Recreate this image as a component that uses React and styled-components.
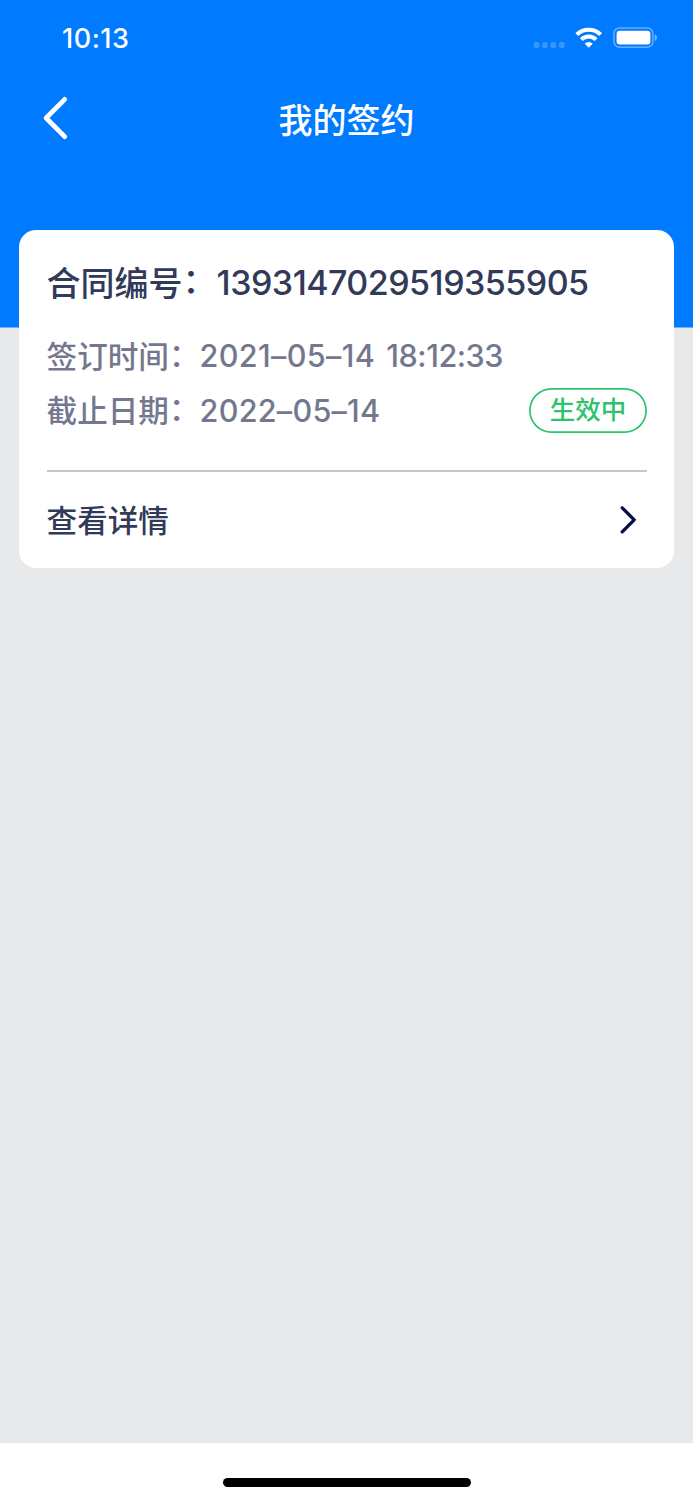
import React from 'react'
import styled, { createGlobalStyle } from 'styled-components'

const contract = {
  number: '1393147029519355905',
  signedDate: '2021–05–14',
  signedTime: '18:12:33',
  endDate: '2022–05–14',
  status: '生效中',
}

const App = () => {
  return (
    <Screen>
      <GlobalStyle />
      <Header>
        <StatusBar>
          <Clock>10:13</Clock>
          <StatusIcons />
        </StatusBar>
        <NavBar>
          <BackButton aria-label="返回">
            <svg width="28" height="46" viewBox="0 0 28 46" fill="none">
              <path d="M22.7 4.4L4.1 23L22.7 41.6" stroke="#fff" strokeWidth="4.8" strokeLinecap="round" strokeLinejoin="round" />
            </svg>
          </BackButton>
          <Title>我的签约</Title>
        </NavBar>
      </Header>

      <Content>
        <Card>
          <ContractNumber>
            <Label>合同编号<Colon>：</Colon></Label>
            <Digits $spacing="-0.53px">{contract.number}</Digits>
          </ContractNumber>
          <InfoRow>
            <Label>签订时间<Colon>：</Colon></Label>
            <Digits $spacing="0.35px">{contract.signedDate}</Digits>
            <Time $spacing="-0.45px">{contract.signedTime}</Time>
          </InfoRow>
          <InfoRow>
            <Label>截止日期<Colon>：</Colon></Label>
            <Digits $spacing="0.25px">{contract.endDate}</Digits>
            <Badge>{contract.status}</Badge>
          </InfoRow>
          <DetailRow>
            <Label>查看详情</Label>
            <svg width="18" height="30" viewBox="0 0 18 30" fill="none">
              <path d="M2.2 2.8L14.2 14.8L2.2 26.8" stroke="#040d42" strokeWidth="3.3" strokeLinecap="round" strokeLinejoin="round" />
            </svg>
          </DetailRow>
        </Card>
      </Content>

      <Footer>
        <HomeIndicator />
      </Footer>
    </Screen>
  )
}

const StatusIcons = () => (
  <svg width="126" height="26" viewBox="0 0 126 26" fill="none">
    <g fill="#fff" fillOpacity="0.22">
      <rect x="2.8" y="17" width="5.6" height="6" rx="1.8" />
      <rect x="11.1" y="17" width="5.6" height="6" rx="1.8" />
      <rect x="19.5" y="17" width="5.6" height="6" rx="1.8" />
      <rect x="28" y="17" width="5.6" height="6" rx="1.8" />
    </g>
    <g stroke="#fff" strokeWidth="4">
      <path d="M45.8 9.5A17 17 0 0 1 69.6 9.5" />
      <path d="M50.3 14.6A10.4 10.4 0 0 1 65.1 14.6" />
    </g>
    <path d="M57.7 22.7L53.6 18.6A5.8 5.8 0 0 1 61.8 18.6Z" fill="#fff" />
    <rect x="82.9" y="3" width="39" height="19.2" rx="5.6" stroke="#fff" strokeOpacity="0.4" strokeWidth="1.5" />
    <rect x="85.6" y="5.7" width="33.8" height="13.8" rx="3" fill="#fff" />
    <path d="M123.7 9.2Q126 10.2 126 12.6Q126 15 123.7 16Z" fill="#fff" fillOpacity="0.45" />
  </svg>
)

export default App

const GlobalStyle = createGlobalStyle`
  body {
    margin: 0;
    background-color: #e8e9eb;
  }
  * {
    box-sizing: border-box;
  }
`

const Screen = styled.div`
  width: 100%;
  height: 1500px;
  display: flex;
  flex-direction: column;
  background: linear-gradient(#007aff 327px, #e8e9eb 328px);
  font-family: Inter, "Noto Sans CJK SC", sans-serif;
  font-weight: 500;
`

const Header = styled.header`
  height: 229.5px;
  color: #fff;
`

const StatusBar = styled.div`
  height: 76px;
  display: flex;
  align-items: center;
  justify-content: space-between;
  padding: 0 36px 0 62px;
`

const Clock = styled.div`
  font-size: 27px;
  line-height: 32px;
  letter-spacing: 0.5px;
  padding-top: 1px;
`

const NavBar = styled.div`
  height: 84px;
  display: grid;
  grid-template-columns: 100px 1fr 100px;
  align-items: center;
`

const BackButton = styled.button`
  display: flex;
  padding: 0 0 0 42px;
  border: none;
  background: none;
`

const Title = styled.h1`
  margin: 0;
  padding-top: 6px;
  font-size: 34px;
  line-height: 48px;
  font-weight: 500;
  text-align: center;
`

const Content = styled.main`
  flex: 1;
  padding: 0 18.6px;
`

const Card = styled.section`
  height: 338px;
  padding: 29.5px 27.4px 0 28px;
  border-radius: 17px;
  background-color: #fff;
`

const Label = styled.span`
  display: flex;
  white-space: nowrap;
`

const Colon = styled.span`
  margin-top: -0.06em;
`

const Digits = styled.span`
  letter-spacing: ${({ $spacing }) => $spacing};
  white-space: nowrap;
`

const Time = styled(Digits)`
  margin-left: 11px;
`

const ContractNumber = styled.h2`
  display: flex;
  align-items: center;
  height: 48px;
  margin: 0 0 22px;
  font-size: 34px;
  line-height: 48px;
  font-weight: 500;
  color: #313a58;

  ${Label} {
    padding-top: 1px;
  }
`

const InfoRow = styled.div`
  display: flex;
  align-items: center;
  height: 54.5px;
  font-size: 30.6px;
  line-height: 44px;
  color: #74788f;

  ${Label} {
    padding-top: 1px;
  }
`

const Badge = styled.span`
  display: flex;
  align-items: center;
  justify-content: center;
  width: 118px;
  height: 45px;
  margin-left: auto;
  padding-bottom: 1px;
  border-radius: 23px;
  box-shadow: inset 0 0 0 1.7px #2cc26e;
  font-size: 25.5px;
  color: #2cc26e;
`

const DetailRow = styled.div`
  display: flex;
  align-items: center;
  justify-content: space-between;
  height: 98px;
  margin-top: 31.5px;
  padding-right: 9px;
  border-top: 2px solid #c5c6d2;
  font-size: 30.6px;
  line-height: 44px;
  color: #313a58;

  ${Label} {
    padding-top: 2px;
  }
`

const Footer = styled.footer`
  height: 57px;
  display: flex;
  justify-content: center;
  padding-top: 35px;
  background-color: #fff;
`

const HomeIndicator = styled.div`
  width: 248px;
  height: 8.5px;
  border-radius: 5px;
  background-color: #000;
`
